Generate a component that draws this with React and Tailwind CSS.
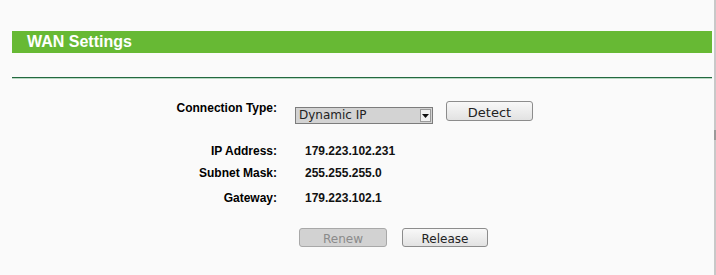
export default function App() {
  const label = "w-[265px] text-right font-bold text-[12px] leading-[14px] text-[#000] [font-family:'Liberation_Sans',Arial,sans-serif]";
  const value = "font-bold text-[12px] leading-[14px] text-[#111] [font-family:'Liberation_Sans',Arial,sans-serif]";
  const dv = "[font-family:'DejaVu_Sans',Verdana,sans-serif]";
  return (
    <div className="w-[716px] h-[275px] bg-[#fafafa] flex overflow-hidden">
      <div className="flex-1 pl-[12px] pr-[2px] pt-[31px]">
        <div className="h-[22px] bg-[#67b934] pl-[15px] flex items-center">
          <span className="text-white font-bold text-[16px] leading-[22px] [font-family:'Liberation_Sans',Arial,sans-serif]">
            WAN Settings
          </span>
        </div>
        <div className="mt-[24px] h-px bg-[#23693f]" />
        <div className="h-px bg-[#b9d8c4]" />

        <div className="flex items-start mt-[22px]">
          <div className={label}>Connection Type:</div>
          <div className={"ml-[18px] mt-[6px] w-[138px] h-[17px] bg-[#d3d3d3] border border-[#7c7c7c] flex items-center justify-between " + dv}>
            <span className="pl-[3px] text-[12px] leading-[15px] text-[#222]">Dynamic IP</span>
            <span className="mr-[1px] w-[11px] h-[13px] bg-[#f2f2f2] border border-[#9a9a9a] flex items-center justify-center">
              <svg width="7" height="4" viewBox="0 0 7 4"><path d="M0 0H7L3.5 4Z" fill="#111" /></svg>
            </span>
          </div>
          <button className={"ml-[13px] w-[87px] h-[20px] rounded-[3px] border border-[#8c8c8c] bg-gradient-to-b from-[#f8f8f8] to-[#e2e2e2] text-[13px] leading-[18px] text-[#222] pt-[2px] " + dv}>
            Detect
          </button>
        </div>

        <div className="flex items-center mt-[20px]">
          <div className={label}>IP Address:</div>
          <div className={"ml-[28px] " + value}>179.223.102.231</div>
        </div>
        <div className="flex items-center mt-[8px]">
          <div className={label}>Subnet Mask:</div>
          <div className={"ml-[28px] " + value}>255.255.255.0</div>
        </div>
        <div className="flex items-center mt-[11px]">
          <div className={label}>Gateway:</div>
          <div className={"ml-[28px] " + value}>179.223.102.1</div>
        </div>

        <div className={"flex mt-[23px] ml-[287px] gap-[15px] " + dv}>
          <button disabled className="w-[88px] h-[19px] rounded-[3px] border border-[#a8a8a8] bg-[#d2d2d2] text-[12px] leading-[17px] text-[#8a8a8a] pt-[2px]">
            Renew
          </button>
          <button className="w-[86px] h-[19px] rounded-[3px] border border-[#8c8c8c] bg-gradient-to-b from-[#f8f8f8] to-[#e2e2e2] text-[12px] leading-[17px] text-[#222] pt-[2px]">
            Release
          </button>
        </div>
      </div>
      <div className="w-[2px] h-full bg-[#c8c8c8] flex flex-col">
        <div className="mt-[130px] h-[10px] bg-[#9a9a9a]" />
      </div>
    </div>
  );
}
